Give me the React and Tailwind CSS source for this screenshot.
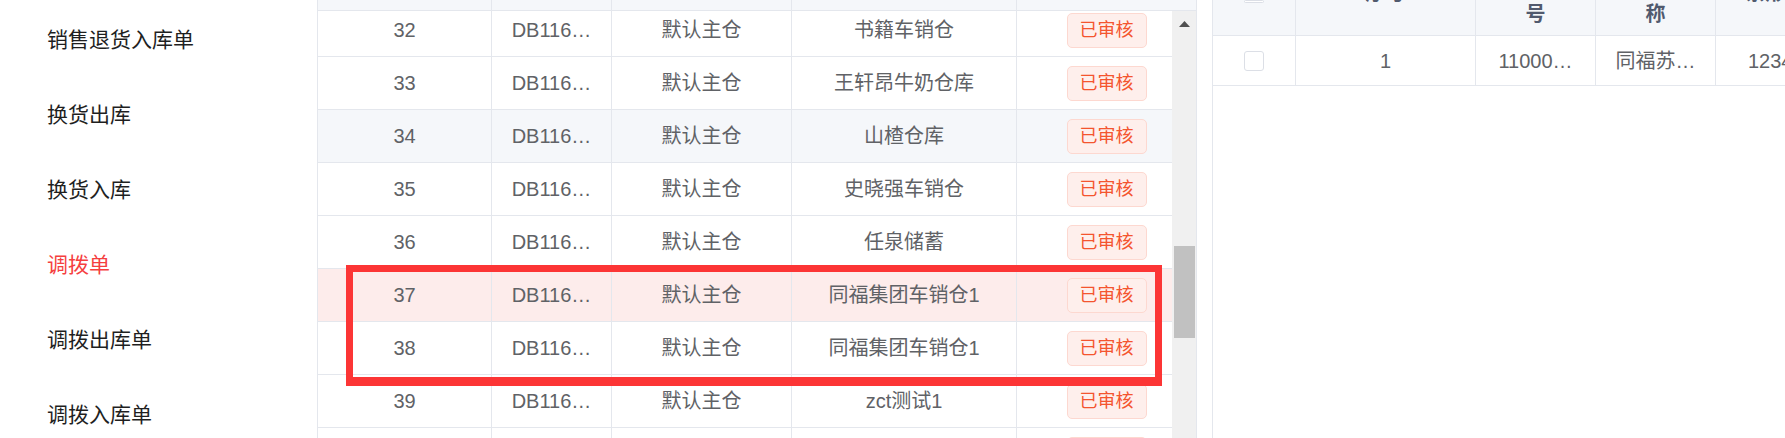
import React from 'react';

const FONT = "font-['Liberation_Sans','Noto_Sans_CJK_SC',sans-serif]";

const menu = [
  { label: '销售退货入库单' },
  { label: '换货出库' },
  { label: '换货入库' },
  { label: '调拨单', active: true },
  { label: '调拨出库单' },
  { label: '调拨入库单' },
];

const rows = [
  { no: 32, store: '书籍车销仓' },
  { no: 33, store: '王轩昂牛奶仓库' },
  { no: 34, store: '山楂仓库', bg: 'bg-[#f5f7fa]' },
  { no: 35, store: '史晓强车销仓' },
  { no: 36, store: '任泉储蓄' },
  { no: 37, store: '同福集团车销仓1', bg: 'bg-[#fdeceb]' },
  { no: 38, store: '同福集团车销仓1' },
  { no: 39, store: 'zct测试1' },
];

const Sidebar = () => (
  <aside className="w-[317px] shrink-0 bg-white pt-[2px]">
    {menu.map((item) => (
      <div
        key={item.label}
        className={`h-[75px] flex items-center pl-[47px] text-[21px] ${
          item.active ? 'text-[#f53f3f]' : 'text-[#1f1f1f]'
        }`}
      >
        {item.label}
      </div>
    ))}
  </aside>
);

const Tag = () => (
  <span className="w-[80px] h-[35px] flex items-center justify-center rounded-[5px] border border-[#fdd8d0] bg-[#feefec] text-[18px] text-[#f4552f]">
    已审核
  </span>
);

const cell = 'h-full flex items-center justify-center border-r border-[#e4e7ed] shrink-0';

const LeftTable = () => (
  <div className="relative w-[880px] shrink-0 flex flex-col border-x border-[#e4e7ed]">
    {/* header, scrolled mostly out of view */}
    <div className="h-[11px] shrink-0 flex bg-[#f5f7fa] border-b border-[#e4e7ed]">
      <div className={`${cell} w-[174px]`} />
      <div className={`${cell} w-[120px]`} />
      <div className={`${cell} w-[180px]`} />
      <div className={`${cell} w-[225px]`} />
      <div className="flex-1" />
    </div>

    <div className="relative flex-1 overflow-hidden">
      <div className="-mt-[7px]">
        {rows.map((r) => (
          <div
            key={r.no}
            className={`h-[53px] flex border-b border-[#e4e7ed] text-[20px] text-[#606266] ${r.bg || 'bg-white'}`}
          >
            <div className={`${cell} w-[174px]`}>{r.no}</div>
            <div className={`${cell} w-[120px]`}>DB116…</div>
            <div className={`${cell} w-[180px]`}>默认主仓</div>
            <div className={`${cell} w-[225px]`}>{r.store}</div>
            <div className="h-full flex-1 flex items-center justify-center">
              <Tag />
            </div>
          </div>
        ))}
        {/* next row, only its tag edge peeks in */}
        <div className="h-[53px] flex">
          <div className={`${cell} w-[174px]`} />
          <div className={`${cell} w-[120px]`} />
          <div className={`${cell} w-[180px]`} />
          <div className={`${cell} w-[225px]`} />
          <div className="h-full flex-1 flex items-center justify-center">
            <span className="w-[80px] h-[35px] rounded-[5px] border border-[#fdd8d0] bg-[#feefec]" />
          </div>
        </div>
      </div>

      {/* scrollbar */}
      <div className="absolute right-0 top-0 bottom-0 w-[24px] bg-[#f0f0f0]">
        <svg className="absolute left-[7px] top-[10px]" width="11" height="6" viewBox="0 0 11 6">
          <path d="M5.5 0 L11 6 L0 6 Z" fill="#505050" />
        </svg>
        <div className="absolute left-[2px] right-[1px] top-[235px] h-[92px] bg-[#c1c1c1]" />
      </div>
    </div>

    {/* annotation box */}
    <div className="absolute left-[28px] top-[265px] w-[816px] h-[121px] border-[7px] border-b-[9px] border-[#fc3535] pointer-events-none" />
  </div>
);

const hcell = 'h-full flex flex-col justify-end items-center border-r border-[#e4e7ed] shrink-0 leading-[26px]';
const rcell = 'h-full flex items-center justify-center border-r border-[#e4e7ed] shrink-0';

const Checkbox = () => (
  <span className="block w-[20px] h-[20px] rounded-[3px] border border-[#dcdfe6] bg-white" />
);

const RightTable = () => (
  <div className="flex-1 min-w-0 border-l border-[#e4e7ed] bg-white overflow-hidden">
    <div className="h-[36px] flex bg-[#f5f7fa] border-b border-[#e4e7ed] overflow-hidden text-[20px] font-bold text-[#515a6e]">
      <div className={`${hcell} w-[83px] pb-[32px]`}>
        <Checkbox />
      </div>
      <div className={`${hcell} w-[180px] pb-[29px]`}>序号</div>
      <div className={`${hcell} w-[120px] pb-[8px]`}>
        <span>商品编</span>
        <span>号</span>
      </div>
      <div className={`${hcell} w-[120px] pb-[8px]`}>
        <span>商品名</span>
        <span>称</span>
      </div>
      <div className={`${hcell} w-[120px] pb-[29px]`}>条形码</div>
    </div>
    <div className="h-[50px] flex border-b border-[#e4e7ed] text-[20px] text-[#606266] whitespace-nowrap">
      <div className={`${rcell} w-[83px]`}>
        <Checkbox />
      </div>
      <div className={`${rcell} w-[180px]`}>1</div>
      <div className={`${rcell} w-[120px]`}>11000…</div>
      <div className={`${rcell} w-[120px]`}>同福苏…</div>
      <div className="h-full flex items-center pl-[32px] shrink-0">12345…</div>
    </div>
  </div>
);

export default function App() {
  return (
    <div className={`flex w-[1785px] h-[438px] overflow-hidden bg-white ${FONT}`}>
      <Sidebar />
      <LeftTable />
      <div className="w-[15px] shrink-0" />
      <RightTable />
    </div>
  );
}
